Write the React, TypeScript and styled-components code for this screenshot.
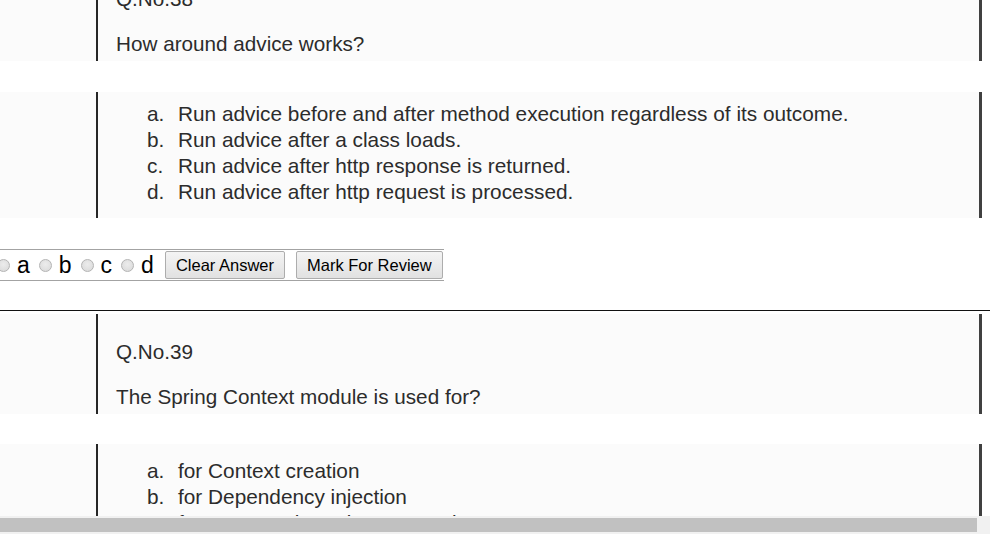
import styled, { createGlobalStyle } from 'styled-components';

const GlobalStyle = createGlobalStyle`
  html, body {
    margin: 0;
    padding: 0;
    background: #ffffff;
    font-family: "Liberation Sans", Arial, sans-serif;
  }
`;

const Page = styled.div`
  width: 990px;
  height: 544px;
  overflow: hidden;
  background: #ffffff;
`;

const Viewport = styled.div`
  height: 516px;
  overflow: hidden;
`;

const Content = styled.div`
  margin-top: -39px;
  display: flex;
  flex-direction: column;
  align-items: flex-start;
`;

interface ImageBlockProps {
  $height: number;
  $gap?: number;
}

const ImageBlock = styled.div<ImageBlockProps>`
  width: 982px;
  height: ${({ $height }) => $height}px;
  margin-top: ${({ $gap = 0 }) => $gap}px;
  padding-left: 96px;
  box-sizing: border-box;
  background: #fbfbfb;
  flex-shrink: 0;
`;

interface FrameProps {
  $padTop: number;
  $padLeft: number;
  $size: number;
}

const Frame = styled.div<FrameProps>`
  height: 100%;
  box-sizing: border-box;
  border-left: 2px solid #262626;
  border-right: 3px solid #404040;
  padding: ${({ $padTop }) => $padTop}px 0 0 ${({ $padLeft }) => $padLeft}px;
  color: #2c2c2c;
  font-size: ${({ $size }) => $size}px;
  line-height: 26px;
`;

const QuestionNo = styled.div`
  margin-bottom: 19px;
`;

const QuestionText = styled.div``;

const OptionRow = styled.div`
  display: flex;
`;

const OptionMark = styled.span`
  width: 31px;
  flex-shrink: 0;
`;

const AnswerBar = styled.div`
  margin: 31px 0 0 -3px;
  width: max-content;
  height: 32px;
  padding-right: 1px;
  box-sizing: border-box;
  border-top: 1px solid #a3a3a3;
  border-bottom: 1px solid #a3a3a3;
  display: flex;
  align-items: center;
  flex-shrink: 0;
`;

const RadioLabel = styled.label`
  display: inline-flex;
  align-items: center;
  gap: 7px;
  margin-right: 9px;
  font-size: 23px;
  color: #000000;
  line-height: 28px;
`;

const Radio = styled.input.attrs({ type: 'radio', name: 'answer' })`
  appearance: none;
  -webkit-appearance: none;
  margin: 0;
  width: 13px;
  height: 13px;
  border-radius: 50%;
  border: 1px solid #b4b4b4;
  background: radial-gradient(circle at 50% 40%, #ececec, #d8d8d8);
  box-sizing: border-box;
`;

const ActionButton = styled.button`
  height: 28px;
  margin-left: 2px;
  margin-right: 9px;
  padding: 0 10px;
  flex-shrink: 0;
  white-space: nowrap;
  border: 1px solid #adadad;
  border-radius: 2px;
  background: linear-gradient(#f4f4f4, #e1e1e1);
  font-family: "Liberation Sans", Arial, sans-serif;
  font-size: 16.5px;
  color: #000000;

  &:last-child {
    margin-right: 0;
  }
`;

const Rule = styled.hr`
  margin: 29px 0 3px 0;
  width: 990px;
  border: 0;
  border-top: 1px solid #111111;
  flex-shrink: 0;
`;

const ScrollTrack = styled.div`
  height: 18px;
  background: #f1f1f1;
  display: flex;
  align-items: center;
`;

const ScrollThumb = styled.div`
  width: 977px;
  height: 14px;
  background: #c1c1c1;
`;

const Option = ({ mark, text }: { mark: string; text: string }) => (
  <OptionRow>
    <OptionMark>{mark}</OptionMark>
    <span>{text}</span>
  </OptionRow>
);

export default function App() {
  return (
    <Page>
      <GlobalStyle />
      <Viewport>
        <Content>
          <ImageBlock $height={100}>
            <Frame $padTop={25} $padLeft={18} $size={20.7}>
              <QuestionNo>Q.No.38</QuestionNo>
              <QuestionText>How around advice works?</QuestionText>
            </Frame>
          </ImageBlock>

          <ImageBlock $height={126} $gap={31}>
            <Frame $padTop={9} $padLeft={49} $size={20.8}>
              <Option mark="a." text="Run advice before and after method execution regardless of its outcome." />
              <Option mark="b." text="Run advice after a class loads." />
              <Option mark="c." text="Run advice after http response is returned." />
              <Option mark="d." text="Run advice after http request is processed." />
            </Frame>
          </ImageBlock>

          <AnswerBar>
            {['a', 'b', 'c', 'd'].map((k) => (
              <RadioLabel key={k}>
                <Radio value={k} />
                {k}
              </RadioLabel>
            ))}
            <ActionButton>Clear Answer</ActionButton>
            <ActionButton>Mark For Review</ActionButton>
          </AnswerBar>

          <Rule />

          <ImageBlock $height={100}>
            <Frame $padTop={25} $padLeft={18} $size={20.7}>
              <QuestionNo>Q.No.39</QuestionNo>
              <QuestionText>The Spring Context module is used for?</QuestionText>
            </Frame>
          </ImageBlock>

          <ImageBlock $height={130} $gap={30}>
            <Frame $padTop={14} $padLeft={49} $size={20.8}>
              <Option mark="a." text="for Context creation" />
              <Option mark="b." text="for Dependency injection" />
              <Option mark="c." text="for Aspect oriented programming" />
            </Frame>
          </ImageBlock>
        </Content>
      </Viewport>
      <ScrollTrack>
        <ScrollThumb />
      </ScrollTrack>
    </Page>
  );
}
